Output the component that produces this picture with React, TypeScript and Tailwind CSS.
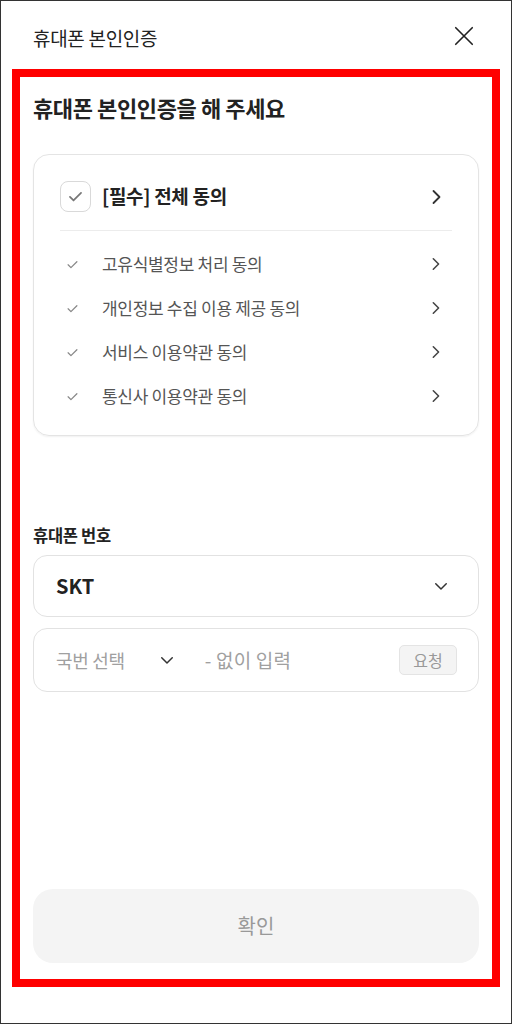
const agreements = [
  "고유식별정보 처리 동의",
  "개인정보 수집 이용 제공 동의",
  "서비스 이용약관 동의",
  "통신사 이용약관 동의",
];

function Check({ className, width = 2 }: { className?: string; width?: number }) {
  return (
    <svg viewBox="0 0 24 24" fill="none" stroke="currentColor" strokeWidth={width} strokeLinecap="round" strokeLinejoin="round" className={className}>
      <path d="M5 12.5l4.5 4.5L19 7.5" />
    </svg>
  );
}

function ChevronRight({ className }: { className?: string }) {
  return (
    <svg viewBox="0 0 10 16" fill="none" stroke="currentColor" strokeWidth={1.8} strokeLinecap="round" strokeLinejoin="round" className={className}>
      <path d="M2.5 2l6 6-6 6" />
    </svg>
  );
}

function ChevronDown({ className }: { className?: string }) {
  return (
    <svg viewBox="0 0 24 24" fill="none" stroke="currentColor" strokeWidth={2} strokeLinecap="round" strokeLinejoin="round" className={className}>
      <path d="M5 9l7 7 7-7" />
    </svg>
  );
}

export default function App() {
  return (
    <div className="w-[512px] h-[1024px] bg-white border border-[#333] flex flex-col font-['Noto_Sans_CJK_KR','Noto_Sans',sans-serif] text-[#222]">
      <header className="h-[68px] shrink-0 flex items-center justify-between pl-[32px] pr-[36px]">
        <h1 className="mt-[6px] text-[19px] tracking-[-0.3px]">휴대폰 본인인증</h1>
        <svg viewBox="0 0 24 24" className="mt-[2px] w-[22px] h-[22px]" fill="none" stroke="#222" strokeWidth={1.8} strokeLinecap="round">
          <path d="M3 3l18 18M21 3L3 21" />
        </svg>
      </header>

      <main className="mx-[11px] h-[918px] border-[8px] border-[#ff0000] flex flex-col px-[13px] pb-[16px]">
        <h2 className="mt-[15px] text-[22px] leading-[30px] font-bold tracking-[-0.4px]">휴대폰 본인인증을 해 주세요</h2>

        <section className="mt-[32px] rounded-[16px] border border-[#e4e4e4] shadow-[0_1px_2px_rgba(0,0,0,0.06)] px-[26px] pt-[26px] pb-[17px]">
          <div className="flex items-center h-[31px]">
            <span className="w-[31px] h-[31px] rounded-[8px] border border-[#d9d9d9] flex items-center justify-center text-[#777]">
              <Check className="w-[19px] h-[19px]" width={2.2} />
            </span>
            <span className="ml-[11px] flex-1 text-[19px] font-bold tracking-[-0.3px]">[필수] 전체 동의</span>
            <ChevronRight className="w-[10px] h-[16px] text-[#333] mr-[11px]" />
          </div>
          <div className="mt-[18px] border-t border-[#ececec]" />
          <ul className="mt-[11px]">
            {agreements.map((a) => (
              <li key={a} className="flex items-center h-[44px]">
                <Check className="w-[15px] h-[15px] text-[#888] ml-[5px]" />
                <span className="ml-[22px] flex-1 text-[17px] text-[#555] tracking-[-0.3px]">{a}</span>
                <ChevronRight className="w-[9px] h-[14px] text-[#444] mr-[12px]" />
              </li>
            ))}
          </ul>
        </section>

        <label className="mt-[88px] text-[16.5px] leading-[22px] font-semibold tracking-[-0.3px]">휴대폰 번호</label>

        <div className="mt-[9px] h-[62px] rounded-[14px] border border-[#e2e2e2] flex items-center pl-[22px] pr-[28px]">
          <span className="flex-1 text-[20px] font-bold">SKT</span>
          <ChevronDown className="w-[18px] h-[18px] text-[#333]" />
        </div>

        <div className="mt-[11px] h-[64px] rounded-[14px] border border-[#e2e2e2] flex items-center pl-[22px] pr-[21px]">
          <span className="text-[18px] text-[#a0a0a0] tracking-[-0.3px]">국번 선택</span>
          <ChevronDown className="ml-[33px] w-[18px] h-[18px] text-[#333]" />
          <span className="ml-[29px] flex-1 text-[19px] text-[#a0a0a0] tracking-[0.2px]">- 없이 입력</span>
          <span className="w-[58px] h-[30px] rounded-[5px] border border-[#e4e4e4] bg-[#f4f4f4] flex items-center justify-center text-[16px] text-[#999]">요청</span>
        </div>

        <button className="mt-auto h-[74px] rounded-[20px] bg-[#f4f4f4] text-[20px] text-[#999]">확인</button>
      </main>
    </div>
  );
}
